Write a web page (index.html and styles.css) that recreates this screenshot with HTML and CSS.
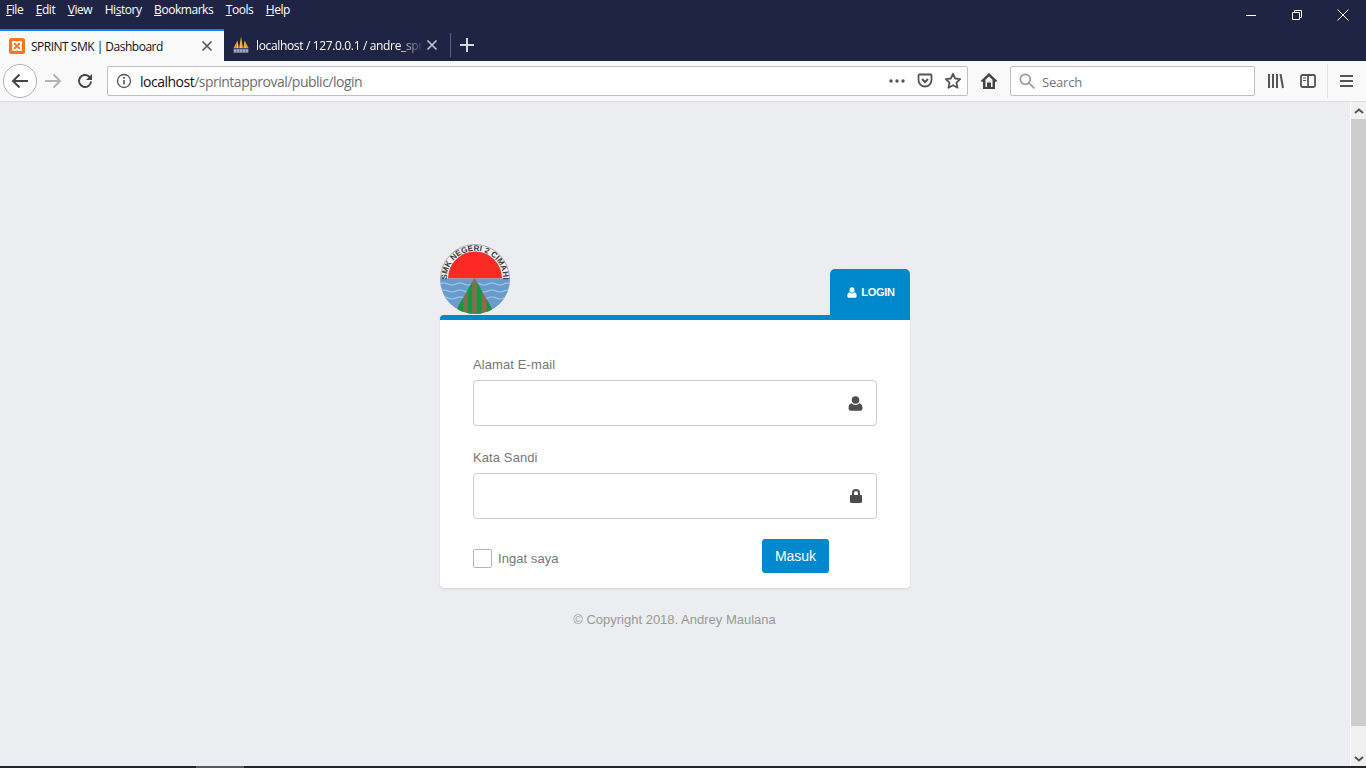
FILE: index.html
```html
<!DOCTYPE html>
<html lang="en">

<head>
  <meta charset="UTF-8">
  <meta name="viewport" content="width=device-width, initial-scale=1.0">
  <title>SPRINT SMK | Dashboard</title>
  <link rel="stylesheet" href="styles.css">
</head>

<body>
  <div class="browser">
    <div class="menubar">
      <div class="menu-items">
        <span><u>F</u>ile</span>
        <span><u>E</u>dit</span>
        <span><u>V</u>iew</span>
        <span>Hi<u>s</u>tory</span>
        <span><u>B</u>ookmarks</span>
        <span><u>T</u>ools</span>
        <span><u>H</u>elp</span>
      </div>
      <div class="window-controls">
        <div class="win-btn">
          <svg width="12" height="12" viewBox="0 0 12 12"><path d="M1 6.500h10" stroke="#fff" /></svg>
        </div>
        <div class="win-btn">
          <svg width="12" height="12" viewBox="0 0 12 12" fill="none" stroke="#fff"><path d="M1.500 3.500h7v7h-7z" /><path d="M3.500 3.500v-2h7v7h-2" /></svg>
        </div>
        <div class="win-btn">
          <svg width="12" height="12" viewBox="0 0 12 12"><path d="M.5.5l11 11M11.500.5l-11 11" stroke="#fff" /></svg>
        </div>
      </div>
    </div>

    <div class="tabbar">
      <div class="tab tab-active">
        <svg class="favicon" viewBox="0 0 16 16">
          <rect width="16" height="16" rx="2.500" fill="#f3781f" />
          <path d="M4 4h3l1 1.500L9 4h3v3l-1.500 1L12 9v3H9L8 10.500 7 12H4V9l1.500-1L4 7z" fill="none" stroke="#fff" stroke-width="1.800" stroke-linejoin="round" />
        </svg>
        <span class="tab-title">SPRINT SMK | Dashboard</span>
        <svg class="tab-close" width="12" height="12" viewBox="0 0 12 12"><path d="M1.500 1.500l9 9M10.500 1.500l-9 9" stroke="#555" stroke-width="1.600" /></svg>
      </div>
      <div class="tab tab-inactive">
        <svg class="favicon favicon-pma" viewBox="0 0 16 16">
          <path d="M.5 11L4.500 3.500 5.800 11zM6 11L8 0l2.200 11zM10.400 11L11.800 3.500 15.500 11z" fill="#f0961e" />
          <path d="M4.500 3.500L4 11h1zM8 0L7.500 11h1zM11.800 3.500L11.500 11h1z" fill="#e8d9c0" />
          <rect x="0.500" y="11.500" width="15" height="4.500" fill="#6e7391" />
          <path d="M2 12.500v2.500M5 12.500v2.500M8 12.500v2.500M11 12.500v2.500M14 12.500v2.500" stroke="#c9ccd8" stroke-width="1.200" />
        </svg>
        <span class="tab-title tab-title-fade">localhost / 127.0.0.1 / andre_spr</span>
        <svg class="tab-close" width="12" height="12" viewBox="0 0 12 12"><path d="M1.500 1.500l9 9M10.500 1.500l-9 9" stroke="#c4c6d0" stroke-width="1.600" /></svg>
      </div>
      <div class="tab-sep"></div>
      <svg class="new-tab" width="14" height="14" viewBox="0 0 14 14"><path d="M7 0v14M0 7h14" stroke="#d6d8e0" stroke-width="2" /></svg>
    </div>

    <div class="navbar">
      <div class="back-btn">
        <svg width="18" height="16" viewBox="0 0 18 16" fill="none" stroke="#444" stroke-width="2"><path d="M17 8H2M8.500 1.500L2 8l6.500 6.500" /></svg>
      </div>
      <div class="nav-btn">
        <svg width="18" height="16" viewBox="0 0 18 16" fill="none" stroke="#b3b3b3" stroke-width="2"><path d="M1 8h15M9.500 1.500L16 8l-6.500 6.500" /></svg>
      </div>
      <div class="nav-btn">
        <svg width="16" height="16" viewBox="0 0 16 16" fill="none" stroke="#444" stroke-width="2"><path d="M14 8.500a6 6 0 1 1-2-5L14 5.500" /><path d="M15 1v6H9z" fill="#444" stroke="none" /></svg>
      </div>
      <div class="urlbar">
        <svg class="url-info" width="16" height="16" viewBox="0 0 16 16"><circle cx="8" cy="8" r="6.500" fill="none" stroke="#555" stroke-width="1.300" /><path d="M8 7v4.500" stroke="#555" stroke-width="1.600" /><circle cx="8" cy="4.800" r="1" fill="#555" /></svg>
        <span class="url-text"><span class="url-host">localhost</span>/sprintapproval/public/login</span>
        <svg class="url-icon-dots" width="16" height="4" viewBox="0 0 16 4" fill="#555"><circle cx="2" cy="2" r="1.700" /><circle cx="8" cy="2" r="1.700" /><circle cx="14" cy="2" r="1.700" /></svg>
        <svg class="url-icon" width="16" height="16" viewBox="0 0 16 16" fill="none" stroke="#555" stroke-width="1.800"><path d="M2.500 1.500h11a1 1 0 0 1 1 1V7a6.500 6.500 0 0 1-13 0V2.500a1 1 0 0 1 1-1z" /><path d="M5 6l3 3 3-3" stroke-width="2" /></svg>
        <svg class="url-icon" width="18" height="18" viewBox="0 0 18 18" fill="none" stroke="#555" stroke-width="1.800" stroke-linejoin="round"><path d="M9 1.800l2.200 4.700 5 .6-3.700 3.500 1 5.100L9 13.200l-4.500 2.500 1-5.100L1.800 7.100l5-.6z" /></svg>
      </div>
      <div class="home-btn">
        <svg width="18" height="18" viewBox="0 0 18 18" fill="#444" fill-rule="evenodd"><path d="M9 1L.8 8.800 2 10.200l1-.9V17h12V9.300l1 .9 1.200-1.400zM9 4.400l3.500 3.300V15H11v-4.500H7V15H5.500V7.700z" /></svg>
      </div>
      <div class="searchbar">
        <svg width="16" height="16" viewBox="0 0 16 16" fill="none" stroke="#999" stroke-width="1.700"><circle cx="6.300" cy="6.300" r="5" /><path d="M10 10l5.300 5.300" /></svg>
        <span class="search-text">Search</span>
      </div>
      <div class="nav-btn nav-btn-first">
        <svg width="16" height="16" viewBox="0 0 16 16" fill="#555"><rect x="0" y="1" width="2" height="14" /><rect x="4" y="1" width="2" height="14" /><rect x="8" y="1" width="2" height="14" /><path d="M11.500 1.300l2-.6L16 14.700l-2 .6z" /></svg>
      </div>
      <div class="nav-btn">
        <svg width="16" height="14" viewBox="0 0 16 14" fill="none" stroke="#555" stroke-width="1.800"><rect x="1" y="1" width="14" height="12" rx="1.500" /><path d="M8 1v12" /><path d="M3 4h3M3 6.500h3" stroke-width="1.200" /></svg>
      </div>
      <div class="nav-sep"></div>
      <div class="hamburger">
        <svg width="14" height="12" viewBox="0 0 14 12" fill="#555"><rect width="13" height="2" y="0" /><rect width="13" height="2" y="5" /><rect width="13" height="2" y="10" /></svg>
      </div>
    </div>

    <div class="viewport">
      <div class="page">
        <div class="login-box">
          <div class="login-head">
            <svg class="logo" width="70" height="70" viewBox="0 0 70 70">
              <defs>
                <clipPath id="disc"><circle cx="35" cy="35" r="35" /></clipPath>
                <clipPath id="hill"><path d="M34.500 34L14 70h41z" /></clipPath>
                <path id="logo-arc" d="M6.800 35a28.200 28.200 0 0 1 56.400 0" />
              </defs>
              <g clip-path="url(#disc)">
                <rect width="70" height="70" fill="#f1f1f3" />
                <path d="M8 34.500a27 27 0 0 1 54 0z" fill="#fb2a25" />
                <rect y="34.500" width="70" height="36" fill="#6a9bcd" />
                <path d="M0 40q4-2 8 0t8 0 8 0 8 0 8 0 8 0 8 0 8 0 8 0M0 47q4-2 8 0t8 0 8 0 8 0 8 0 8 0 8 0 8 0 8 0M0 54q4-2 8 0t8 0 8 0 8 0 8 0 8 0 8 0 8 0 8 0" fill="none" stroke="#a6cdea" stroke-width="1.200" />
                <g clip-path="url(#hill)">
                  <rect x="10" y="30" width="50" height="40" fill="#8a6b52" />
                  <path d="M18.300 30h5v40h-5zM27.700 30h4.500v40h-4.500zM36.700 30h5v40h-5zM46.700 30h5v40h-5z" fill="#0f9a3d" />
                </g>
              </g>
              <path d="M.5 35a34.500 34.500 0 0 1 69 0" fill="none" stroke="#a9a9ad" />
              <text class="logo-text"><textPath href="#logo-arc" startOffset="50%" text-anchor="middle">SMK NEGERI 2 CIMAHI</textPath></text>
            </svg>
            <div class="login-tab">
              <svg width="10" height="11" viewBox="0 0 14 14" fill="#fff" preserveAspectRatio="none"><circle cx="7" cy="3.800" r="3.500" /><path d="M3.200 6.800C1.200 7.300.5 9 .5 11.500c0 1.400.8 2.300 2 2.300h9c1.200 0 2-.9 2-2.300 0-2.500-.7-4.200-2.700-4.700-1 .9-2.400 1.500-3.800 1.500s-2.800-.6-3.800-1.500z" /></svg>
              <span>LOGIN</span>
            </div>
          </div>

          <form class="login-card">
            <div class="form-group">
              <label class="form-label">Alamat E-mail</label>
              <div class="input-box">
                <svg width="15" height="15" viewBox="0 0 14 14" fill="#4d4d4d"><circle cx="7" cy="3.800" r="3.500" /><path d="M3.200 6.800C1.200 7.300.5 9 .5 11.500c0 1.400.8 2.300 2 2.300h9c1.200 0 2-.9 2-2.300 0-2.500-.7-4.200-2.700-4.700-1 .9-2.400 1.500-3.800 1.500s-2.800-.6-3.800-1.500z" /></svg>
              </div>
            </div>
            <div class="form-group">
              <label class="form-label">Kata Sandi</label>
              <div class="input-box">
                <svg class="lock-icon" width="12" height="14" viewBox="0 0 12 14" fill="#4d4d4d"><path d="M1.200 6H2V4a4 4 0 0 1 8 0v2h.8c.7 0 1.200.5 1.200 1.200v5.600c0 .7-.5 1.200-1.200 1.200H1.200C.5 14 0 13.500 0 12.800V7.200C0 6.500.5 6 1.200 6zM4 6h4V4a2 2 0 0 0-4 0z" /></svg>
              </div>
            </div>
            <div class="form-footer">
              <div class="remember">
                <span class="checkbox"></span>
                <span>Ingat saya</span>
              </div>
              <button type="button" class="btn-submit">Masuk</button>
            </div>
          </form>

          <p class="copyright">© Copyright 2018. Andrey Maulana</p>
        </div>
      </div>

      <div class="scrollbar">
        <svg width="10" height="6" viewBox="0 0 10 6"><path d="M1 5l4-3.500L9 5" fill="none" stroke="#555" stroke-width="2" /></svg>
        <div class="scroll-thumb"></div>
        <svg width="10" height="6" viewBox="0 0 10 6"><path d="M1 1l4 3.500L9 1" fill="none" stroke="#555" stroke-width="2" /></svg>
      </div>
    </div>

    <div class="taskbar">
      <div class="task-item"></div>
    </div>
  </div>
</body>

</html>
```

FILE: styles.css
```css
* {
  box-sizing: border-box;
}

html,
body {
  margin: 0;
  padding: 0;
  height: 100%;
  overflow: hidden;
}

body {
  font-family: "Liberation Sans", Arial, sans-serif;
  background-color: #ebedf0;
}

.browser {
  display: flex;
  flex-direction: column;
  width: 1366px;
  height: 768px;
}

/* browser chrome */
.menubar {
  display: flex;
  justify-content: space-between;
  height: 29px;
  background-color: #1f2444;
  color: #ffffff;
  font-family: "Open Sans", sans-serif;
  font-size: 12px;
  letter-spacing: -0.45px;
}

.menu-items {
  display: flex;
  gap: 12.5px;
  padding: 1px 0 0 6px;
  line-height: 18px;
}

.window-controls {
  display: flex;
}

.win-btn {
  display: flex;
  justify-content: center;
  align-items: center;
  width: 46px;
  height: 29px;
}

.tabbar {
  display: flex;
  align-items: center;
  height: 32px;
  background-color: #1f2444;
  font-family: "Open Sans", sans-serif;
  font-size: 12px;
}

.tab {
  display: flex;
  align-items: center;
  width: 224px;
  height: 32px;
  margin-right: 1px;
  padding: 0 11px 0 9px;
  color: #ffffff;
}

.tab-active {
  border-top: 2px solid #0a84ff;
  background-color: #f9f9fa;
  color: #111111;
  letter-spacing: -0.5px;
}

.tab-inactive {
  letter-spacing: -0.35px;
}

.favicon {
  flex: none;
  width: 16px;
  height: 16px;
  margin-right: 6px;
}

.favicon-pma {
  margin: 0 7px 0 -1px;
}

.tab-title {
  flex: 1;
  overflow: hidden;
  white-space: nowrap;
}

.tab-title-fade {
  -webkit-mask-image: linear-gradient(to right, #000 85%, transparent 100%);
  mask-image: linear-gradient(to right, #000 85%, transparent 100%);
}

.tab-close {
  flex: none;
  margin-left: 8px;
}

.tab-inactive .tab-close {
  margin-left: 2px;
}

.tab-sep {
  width: 1px;
  height: 24px;
  background-color: #5b5f78;
}

.new-tab {
  margin-left: 9px;
}

.navbar {
  display: flex;
  align-items: center;
  height: 41px;
  padding-left: 3px;
  background-color: #f9f9fa;
  border-bottom: 1px solid #dcdde0;
}

.back-btn {
  display: flex;
  justify-content: center;
  align-items: center;
  width: 34px;
  height: 34px;
  background-color: #ffffff;
  border: 1px solid #b1b1b3;
  border-radius: 50%;
}

.nav-btn {
  display: flex;
  justify-content: center;
  align-items: center;
  width: 32px;
  height: 34px;
}

.nav-btn-first {
  margin-left: 5px;
}

.urlbar {
  display: flex;
  align-items: center;
  width: 861px;
  height: 30px;
  margin-left: 6px;
  padding: 0 5px 0 8px;
  background-color: #ffffff;
  border: 1px solid #c0c0c2;
  border-radius: 2px;
}

.url-info {
  flex: none;
}

.url-text {
  flex: 1;
  margin-left: 8px;
  padding-top: 1px;
  font-family: "Open Sans", sans-serif;
  font-size: 14px;
  letter-spacing: -0.5px;
  color: #6d6d6d;
}

.url-host {
  color: #111111;
}

.url-icon-dots {
  margin-right: 12px;
}

.url-icon {
  margin-right: 11px;
}

.url-icon:last-child {
  margin-right: 0;
}

.home-btn {
  display: flex;
  justify-content: center;
  align-items: center;
  width: 42px;
  height: 34px;
}

.searchbar {
  display: flex;
  align-items: center;
  width: 245px;
  height: 30px;
  padding-left: 8px;
  background-color: #ffffff;
  border: 1px solid #c0c0c2;
  border-radius: 2px;
}

.search-text {
  margin-left: 7px;
  padding-top: 1px;
  font-family: "Open Sans", sans-serif;
  font-size: 13px;
  letter-spacing: -0.2px;
  color: #757575;
}

.nav-sep {
  width: 1px;
  height: 34px;
  margin-left: 3px;
  background-color: #e3e3e5;
}

.hamburger {
  display: flex;
  justify-content: center;
  align-items: center;
  width: 38px;
  height: 34px;
}

/* page */
.viewport {
  display: flex;
  flex: 1;
  min-height: 0;
}

.page {
  flex: 1;
  padding-top: 142px;
  background-color: #ebedf0;
}

.scrollbar {
  display: flex;
  flex-direction: column;
  align-items: center;
  width: 16px;
  padding: 6px 0 4px;
  background-color: #f0f0f0;
  border-left: 1px solid #ffffff;
}

.scroll-thumb {
  flex: 1;
  width: 100%;
  margin: 5px 0 30px;
  background-color: #cdcdcd;
}

.taskbar {
  height: 2px;
  padding-left: 196px;
  background-color: #23272b;
}

.task-item {
  width: 48px;
  height: 2px;
  background-color: #55585c;
}

/* login */
.login-box {
  width: 470px;
  margin: 0 auto;
}

.login-head {
  display: flex;
  justify-content: space-between;
  align-items: flex-end;
  height: 71px;
}

.logo {
  display: block;
  margin-bottom: 1px;
}

.logo-text {
  font-size: 8px;
  font-weight: bold;
  letter-spacing: 0.1px;
  fill: #3a3a3a;
}

.login-tab {
  display: flex;
  justify-content: center;
  align-items: center;
  gap: 4px;
  width: 80px;
  height: 46px;
  padding-left: 2px;
  background-color: #0088cc;
  border-radius: 5px 5px 0 0;
  color: #ffffff;
  font-size: 11px;
  font-weight: bold;
  letter-spacing: -0.3px;
}

.login-card {
  padding: 35px 33px 15px;
  background-color: #ffffff;
  border-top: 5px solid #0088cc;
  border-radius: 4px;
  box-shadow: 0 1px 2px rgba(0, 0, 0, 0.1);
}

.login-head + .login-card {
  border-top-right-radius: 0;
}

.form-group {
  margin-bottom: 22px;
}

.form-label {
  display: block;
  margin-bottom: 5px;
  font-size: 13px;
  line-height: 19px;
  padding-bottom: 1px;
  letter-spacing: 0.1px;
  color: #777777;
}

.input-box {
  display: flex;
  justify-content: flex-end;
  align-items: center;
  height: 46px;
  padding-right: 13px;
  background-color: #ffffff;
  border: 1px solid #cccccc;
  border-radius: 4px;
}

.lock-icon {
  margin-right: 1px;
}

.form-footer {
  display: flex;
  justify-content: space-between;
  padding-right: 48px;
  margin-top: -2px;
}

.remember {
  display: flex;
  align-items: center;
  gap: 6px;
  padding-top: 4px;
  font-size: 13px;
  letter-spacing: 0.05px;
  color: #777777;
}

.checkbox {
  display: block;
  width: 19px;
  height: 19px;
  border: 1px solid #b5b5b5;
  border-radius: 2px;
}

.btn-submit {
  width: 67px;
  height: 34px;
  padding: 0;
  background-color: #0088cc;
  border: none;
  border-radius: 3px;
  color: #ffffff;
  font-family: inherit;
  font-size: 14px;
}

.copyright {
  margin: 23px 0 0;
  padding-right: 1px;
  font-size: 13px;
  line-height: 17px;
  text-align: center;
  color: #999999;
}
```
